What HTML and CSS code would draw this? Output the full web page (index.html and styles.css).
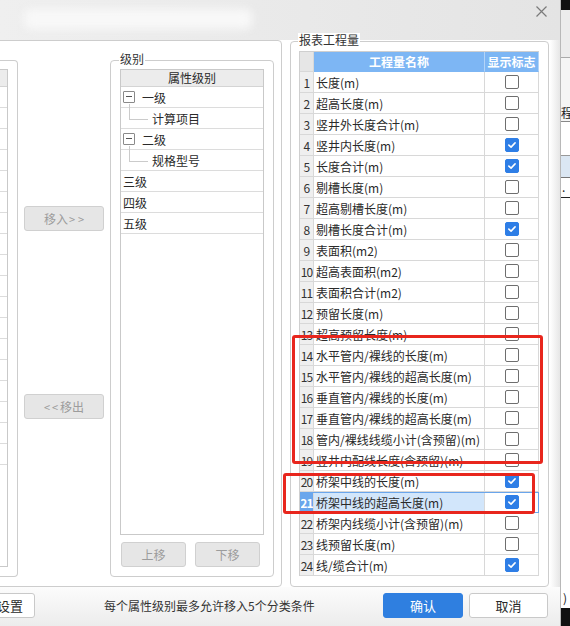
FILE: index.html
```html
<!DOCTYPE html>
<html lang="zh">
<head>
<meta charset="utf-8">
<title>报表工程量设置</title>
<link rel="stylesheet" href="styles.css">
</head>
<body>
<div class="screen">
  <div class="dialog">
    <div class="titlebar">
      <div class="blur"></div>
      <svg class="close" viewBox="0 0 11 11"><path d="M0.5 0.5 L10.5 10.5 M10.5 0.5 L0.5 10.5" stroke="#7a7a7a" stroke-width="1.2" fill="none"/></svg>
    </div>
    <div class="main">
      <div class="left-panel">
        <div class="group src">
          <div class="list src-list">
            <div class="lhead"></div>
            <div class="lrow"></div><div class="lrow"></div><div class="lrow"></div>
            <div class="lrow"></div><div class="lrow"></div><div class="lrow"></div>
            <div class="lrow"></div><div class="lrow"></div><div class="lrow"></div>
            <div class="lrow"></div><div class="lrow"></div><div class="lrow"></div>
            <div class="lrow"></div><div class="lrow"></div><div class="lrow"></div>
            <div class="lrow"></div><div class="lrow"></div><div class="lrow"></div>
          </div>
        </div>
        <div class="mid">
          <button class="btn">移入<span class="arr after">&gt;&gt;</span></button>
          <button class="btn"><span class="arr before">&lt;&lt;</span>移出</button>
        </div>
        <div class="group level">
          <span class="gtitle">级别</span>
          <div class="list level-list">
            <div class="lhead">属性级别</div>
            <div class="lrow"><span class="tog"></span><span class="node">一级</span></div>
            <div class="lrow child">计算项目</div>
            <div class="lrow"><span class="tog"></span><span class="node">二级</span></div>
            <div class="lrow child">规格型号</div>
            <div class="lrow">三级</div>
            <div class="lrow">四级</div>
            <div class="lrow">五级</div>
          </div>
          <div class="btnrow">
            <button class="btn">上移</button>
            <button class="btn">下移</button>
          </div>
        </div>
      </div>
      <div class="group report">
        <span class="gtitle">报表工程量</span>
        <div class="tbl">
          <div class="tr thead"><div class="num"></div><div class="th">工程量名称</div><div class="th">显示标志</div></div>
          <div class="tr"><div class="num">1</div><div class="name">长度(m)</div><div class="chk"><span class="cb"></span></div></div>
          <div class="tr"><div class="num">2</div><div class="name">超高长度(m)</div><div class="chk"><span class="cb"></span></div></div>
          <div class="tr"><div class="num">3</div><div class="name">竖井外长度合计(m)</div><div class="chk"><span class="cb"></span></div></div>
          <div class="tr"><div class="num">4</div><div class="name">竖井内长度(m)</div><div class="chk"><span class="cb on"><svg viewBox="0 0 14 14"><path d="M3.3 7.1 L5.9 9.5 L10.6 4.5"/></svg></span></div></div>
          <div class="tr"><div class="num">5</div><div class="name">长度合计(m)</div><div class="chk"><span class="cb on"><svg viewBox="0 0 14 14"><path d="M3.3 7.1 L5.9 9.5 L10.6 4.5"/></svg></span></div></div>
          <div class="tr"><div class="num">6</div><div class="name">剔槽长度(m)</div><div class="chk"><span class="cb"></span></div></div>
          <div class="tr"><div class="num">7</div><div class="name">超高剔槽长度(m)</div><div class="chk"><span class="cb"></span></div></div>
          <div class="tr"><div class="num">8</div><div class="name">剔槽长度合计(m)</div><div class="chk"><span class="cb on"><svg viewBox="0 0 14 14"><path d="M3.3 7.1 L5.9 9.5 L10.6 4.5"/></svg></span></div></div>
          <div class="tr"><div class="num">9</div><div class="name">表面积(m2)</div><div class="chk"><span class="cb"></span></div></div>
          <div class="tr"><div class="num">10</div><div class="name">超高表面积(m2)</div><div class="chk"><span class="cb"></span></div></div>
          <div class="tr"><div class="num">11</div><div class="name">表面积合计(m2)</div><div class="chk"><span class="cb"></span></div></div>
          <div class="tr"><div class="num">12</div><div class="name">预留长度(m)</div><div class="chk"><span class="cb"></span></div></div>
          <div class="tr"><div class="num">13</div><div class="name">超高预留长度(m)</div><div class="chk"><span class="cb"></span></div></div>
          <div class="tr"><div class="num">14</div><div class="name">水平管内/裸线的长度(m)</div><div class="chk"><span class="cb"></span></div></div>
          <div class="tr"><div class="num">15</div><div class="name">水平管内/裸线的超高长度(m)</div><div class="chk"><span class="cb"></span></div></div>
          <div class="tr"><div class="num">16</div><div class="name">垂直管内/裸线的长度(m)</div><div class="chk"><span class="cb"></span></div></div>
          <div class="tr"><div class="num">17</div><div class="name">垂直管内/裸线的超高长度(m)</div><div class="chk"><span class="cb"></span></div></div>
          <div class="tr"><div class="num">18</div><div class="name">管内/裸线线缆小计(含预留)(m)</div><div class="chk"><span class="cb"></span></div></div>
          <div class="tr"><div class="num">19</div><div class="name">竖井内配线长度(含预留)(m)</div><div class="chk"><span class="cb"></span></div></div>
          <div class="tr"><div class="num">20</div><div class="name">桥架中线的长度(m)</div><div class="chk"><span class="cb on"><svg viewBox="0 0 14 14"><path d="M3.3 7.1 L5.9 9.5 L10.6 4.5"/></svg></span></div></div>
          <div class="tr sel"><div class="num">21</div><div class="name">桥架中线的超高长度(m)</div><div class="chk"><span class="cb on"><svg viewBox="0 0 14 14"><path d="M3.3 7.1 L5.9 9.5 L10.6 4.5"/></svg></span></div></div>
          <div class="tr"><div class="num">22</div><div class="name">桥架内线缆小计(含预留)(m)</div><div class="chk"><span class="cb"></span></div></div>
          <div class="tr"><div class="num">23</div><div class="name">线预留长度(m)</div><div class="chk"><span class="cb"></span></div></div>
          <div class="tr"><div class="num">24</div><div class="name">线/缆合计(m)</div><div class="chk"><span class="cb on"><svg viewBox="0 0 14 14"><path d="M3.3 7.1 L5.9 9.5 L10.6 4.5"/></svg></span></div></div>
        </div>
      </div>
    </div>
    <div class="footer">
      <button class="fbtn set">设置</button>
      <span class="tip">每个属性级别最多允许移入5个分类条件</span>
      <button class="fbtn ok">确认</button>
      <button class="fbtn cancel">取消</button>
    </div>
  </div>
  <div class="bgwin">
    <div class="bw-black"></div>
    <div class="bw-gray"></div>
    <div class="bw-a">程</div>
    <div class="bw-w"></div>
    <div class="bw-blue"></div>
    <div class="bw-t">.</div>
    <div class="bw-fill"></div>
    <div class="bw-end">)</div>
    <div class="bw-black2"></div>
  </div>
  <div class="mark mark1"></div>
  <div class="mark mark2"></div>
</div>
</body>
</html>
```

FILE: styles.css
```css
* { box-sizing: border-box; }
html, body { margin: 0; padding: 0; }
body {
  width: 570px;
  height: 626px;
  overflow: hidden;
  font-family: "Noto Sans CJK SC", "Noto Sans", sans-serif;
  font-size: 12px;
  color: #2a2a2a;
}
.screen {
  position: relative;
  display: flex;
  width: 570px;
  height: 626px;
  overflow: hidden;
  background: #e6e6e6;
}
.dialog {
  width: 560px;
  flex: none;
  display: flex;
  flex-direction: column;
  overflow: hidden;
  background: linear-gradient(to right, #fff 550px, #e6e6e6 560px);
}

/* title bar */
.titlebar {
  height: 40px;
  flex: none;
  display: flex;
  align-items: flex-start;
  background: linear-gradient(to right, #efefef, #e4e4e4);
}
.blur {
  margin: 9px 0 0 24px;
  width: 228px;
  height: 20px;
  background: #f8f8f8;
  border-radius: 6px;
  filter: blur(4px);
}
.close {
  margin: 6px 13px 0 auto;
  width: 11px;
  height: 11px;
}

/* main area */
.main {
  height: 547px;
  flex: none;
  display: flex;
  align-items: flex-start;
}
.left-panel {
  margin-left: -10px;
  width: 292px;
  height: 547px;
  flex: none;
  border: 1px solid #cdcdcd;
  border-radius: 0 4px 4px 0;
  padding-top: 19px;
  display: flex;
  align-items: flex-start;
  background: #fff;
}
.group {
  position: relative;
  flex: none;
  border: 1px solid #cdcdcd;
  border-radius: 4px;
  background: #fff;
}
.gtitle {
  position: absolute;
  top: -9px;
  left: 8px;
  padding: 0 1px;
  line-height: 14px;
  background: #fff;
  color: #333;
}
.src {
  width: 27px;
  height: 517px;
  padding: 8px 9px 0 0;
  border-left: none;
  border-radius: 0 4px 4px 0;
}
.list {
  border: 1px solid #c9c9c9;
  background: #fff;
}
.src-list { height: 498px; }
.lhead {
  height: 17px;
  background: #ececec;
  border-bottom: 1px solid #d4d4d4;
  text-align: center;
  line-height: 16px;
}
.lrow {
  position: relative;
  height: 21px;
  border-bottom: 1px solid #dcdcdc;
  display: flex;
  align-items: center;
  padding-left: 2px;
  white-space: nowrap;
}
.tog {
  position: relative;
  width: 12px;
  height: 12px;
  border: 1px solid #8a8a8a;
  border-radius: 1px;
  flex: none;
}
.tog::after {
  content: "";
  position: absolute;
  left: 2px;
  top: 4px;
  width: 6px;
  height: 1px;
  background: #555;
}
.node { margin-left: 7px; }
.lrow.child { padding-left: 31px; }
.lrow.child::before {
  content: "";
  position: absolute;
  left: 8px;
  top: -4px;
  width: 18px;
  height: 15px;
  border-left: 1px solid #cbcbcb;
  border-bottom: 1px solid #cbcbcb;
}

.mid {
  width: 80px;
  margin-left: 6px;
  flex: none;
  display: flex;
  flex-direction: column;
  padding-top: 146px;
  gap: 163px;
}
.btn {
  height: 25px;
  border: 1px solid #d0d0d0;
  border-radius: 3px;
  background: #e6e6e6;
  color: #9c9c9c;
  font: inherit;
  padding: 0;
}
.arr { font-size: 11px; }
.arr.after { margin-left: 1px; letter-spacing: 3px; margin-right: -3px; }
.arr.before { letter-spacing: 2px; }

.level {
  margin-left: 6px;
  width: 164px;
  height: 517px;
  padding: 8px 9px 0 9px;
}
.level-list { height: 466px; }
.btnrow {
  display: flex;
  gap: 9px;
  margin-top: 7px;
  padding-left: 1px;
}
.btnrow .btn { width: 65px; }

/* report group */
.report {
  margin-left: 8px;
  margin-top: 1px;
  width: 259px;
  height: 546px;
  padding: 9px 9px 0 8px;
}
.report .gtitle { left: 7px; }
.tbl {
  width: 240px;
  border-top: 1px solid #cfcfcf;
  border-left: 1px solid #cfcfcf;
}
.tr {
  display: grid;
  grid-template-columns: 14px 171px 54px;
  height: 21px;
}
.tr.thead { height: 20px; }
.tr > div {
  border-right: 1px solid #d8d8d8;
  border-bottom: 1px solid #d8d8d8;
  display: flex;
  align-items: center;
  overflow: visible;
}
.num {
  justify-content: center;
  background: #efefef;
  letter-spacing: -0.8px;
  white-space: nowrap;
  color: #333;
}
.thead .num { background: #e6e6e6; }
.tr > .th {
  background: #7db6f4;
  color: #fff;
  font-weight: bold;
  justify-content: center;
  border-right-color: #b3d4f8;
  border-bottom-color: #7db6f4;
  white-space: nowrap;
}
.name {
  padding-left: 2px;
  white-space: nowrap;
}
.chk { justify-content: center; }
.cb {
  width: 14px;
  height: 14px;
  border: 1px solid #6e6e6e;
  border-radius: 2px;
  background: #fff;
}
.cb.on {
  background: #2e7ee6;
  border-color: #2e7ee6;
  display: flex;
}
.cb svg {
  width: 12px;
  height: 12px;
}
.cb svg path {
  fill: none;
  stroke: #fff;
  stroke-width: 1.8;
  stroke-linecap: round;
  stroke-linejoin: round;
}
.tr.sel {
  outline: 1px solid #6aa6ec;
  outline-offset: -1px;
  position: relative;
}
.tr.sel > .num {
  background: #6aa6ec;
  color: #fff;
  font-weight: bold;
}
.tr.sel > .name { background: #d2e6fb; }

/* footer */
.footer {
  height: 39px;
  flex: none;
  display: flex;
  align-items: flex-start;
  padding-top: 6px;
  background: linear-gradient(#fcfcfc, #ececec);
}
.fbtn {
  height: 25px;
  border: 1px solid #c9c9c9;
  border-radius: 3px;
  background: #fff;
  font: inherit;
  color: #2a2a2a;
  padding: 0;
}
.set { margin-left: -15px; width: 50px; font-size: 13px; }
.tip {
  margin-left: 69px;
  line-height: 25px;
  color: #333;
  white-space: nowrap;
}
.ok {
  margin-left: auto;
  width: 80px;
  background: #2f7fe0;
  border-color: #2f7fe0;
  color: #fff;
  font-size: 13px;
}
.cancel {
  margin-left: 6px;
  margin-right: 12px;
  width: 79px;
  font-size: 13px;
}

/* background window strip */
.bgwin {
  width: 10px;
  flex: none;
  display: flex;
  flex-direction: column;
  border-left: 1px solid #b8b8b8;
  background: #fff;
  overflow: hidden;
  font-size: 12px;
  white-space: nowrap;
  color: #222;
}
.bw-black { height: 10px; background: #111; }
.bw-gray { height: 48px; background: #ececec; border-bottom: 1px solid #aaa; }
.bw-a {
  height: 64px;
  background: #f5f5f5;
  border-bottom: 1px solid #888;
  display: flex;
  align-items: flex-end;
  padding-bottom: 1px;
  line-height: 14px;
}
.bw-w { height: 34px; border-bottom: 1px solid #999; }
.bw-blue { height: 22px; background: #dbe7f3; border-bottom: 1px solid #777; }
.bw-t { height: 20px; line-height: 18px; padding-left: 1px; border-bottom: 1px solid #222; }
.bw-fill { flex: 1; }
.bw-end { height: 18px; line-height: 16px; padding-left: 2px; }
.bw-black2 { height: 18px; background: #111; }

/* annotation marks */
.mark {
  position: absolute;
  border: 3px solid #e8261d;
  border-radius: 3px;
}
.mark1 { left: 292px; top: 335px; width: 251px; height: 129px; }
.mark2 { left: 283px; top: 473px; width: 252px; height: 41px; }
```
